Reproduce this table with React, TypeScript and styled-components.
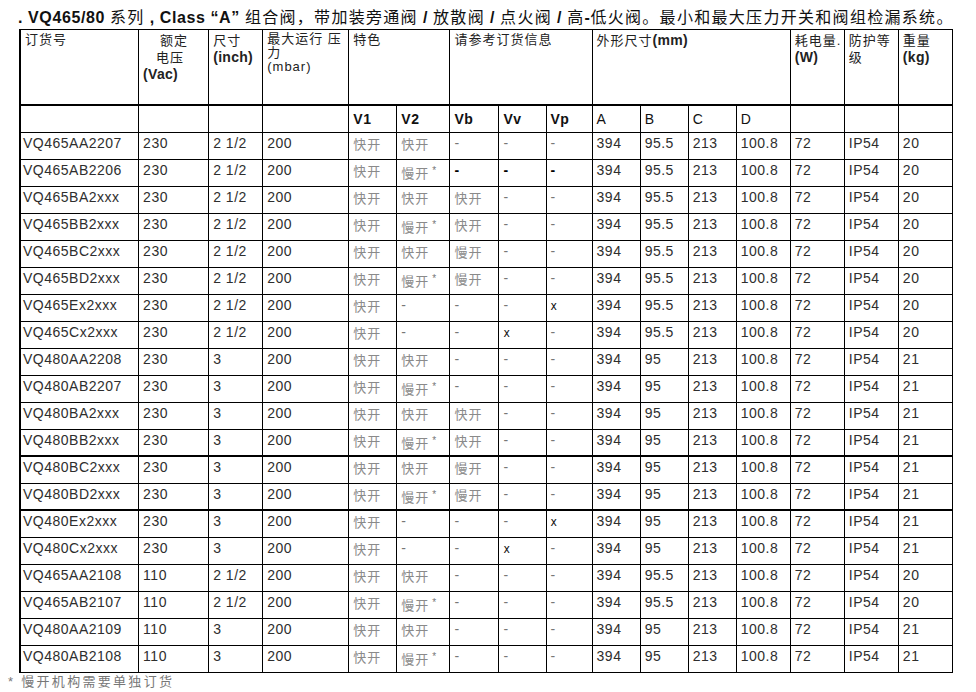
import styled, { createGlobalStyle } from "styled-components";

const GlobalStyle = createGlobalStyle`
  html, body {
    margin: 0;
    padding: 0;
    background: #ffffff;
  }
  body {
    font-family: "Liberation Sans", "Noto Sans CJK SC", sans-serif;
    color: #222222;
  }
`;

const Page = styled.div`
  width: 976px;
  height: 692px;
  padding-left: 8px;
  box-sizing: border-box;
  overflow: hidden;
`;

const Title = styled.h1`
  margin: 0 0 0 10px;
  height: 29px;
  padding-top: 8px;
  box-sizing: border-box;
  font-size: 16px;
  line-height: 19px;
  font-weight: bold;
  color: #111111;
  white-space: nowrap;
  letter-spacing: 0.6px;
`;

const TitleCn = styled.span`
  font-weight: normal;
  font-size: 16px;
  letter-spacing: 1.3px;
`;

const Table = styled.table`
  margin-left: 11px;
  border-collapse: separate;
  border-spacing: 0;
  table-layout: fixed;
  width: 934px;
  border-top: 1px solid #000;
  border-left: 2px solid #000;
  font-size: 14px;
  letter-spacing: 0.5px;
`;

const HeadRow = styled.tr<{ $height: number }>`
  height: ${p => p.$height}px;
`;

const HeadCell = styled.th<{ $thick?: boolean }>`
  border-right: 1px solid #000;
  border-bottom: ${p => (p.$thick ? 2 : 1)}px solid #000;
  vertical-align: top;
  text-align: left;
  font-weight: normal;
  padding: 2px 3px 0 4px;
  font-size: 13px;
  line-height: 16px;
  letter-spacing: 1px;
  color: #222;
  overflow: hidden;
`;

const SubCell = styled.th<{ $bold?: boolean }>`
  border-right: 1px solid #000;
  border-bottom: 1px solid #000;
  vertical-align: middle;
  text-align: left;
  font-weight: ${p => (p.$bold ? "bold" : "normal")};
  padding: 0 4px;
  font-size: 14px;
  color: #111;
`;

const Line = styled.span<{ $indent?: number; $bold?: boolean; $tight?: boolean }>`
  display: block;
  padding-left: ${p => p.$indent ?? 0}px;
  font-weight: ${p => (p.$bold ? "bold" : "normal")};
  font-size: ${p => (p.$bold ? 14 : 13)}px;
  letter-spacing: ${p => (p.$bold ? 0.3 : 1)}px;
  line-height: ${p => (p.$tight ? 14 : 17)}px;
  white-space: nowrap;
`;

const Bold = styled.b`
  font-size: 14px;
  letter-spacing: 0.3px;
`;

const Row = styled.tr`
  height: 27px;
`;

const Cell = styled.td<{ $thick?: boolean; $first?: boolean }>`
  border-right: 1px solid #000;
  border-bottom: ${p => (p.$thick ? 2 : 1)}px solid #000;
  vertical-align: top;
  padding: 2px 2px 0 ${p => (p.$first ? 2 : 4)}px;
  line-height: 16px;
  color: #2e2e2e;
  white-space: nowrap;
  overflow: hidden;
`;

const Speed = styled.span`
  font-size: 13px;
  color: #8a8a8a;
  letter-spacing: 1px;
  position: relative;
  top: 1px;
`;

const Star = styled.span`
  font-size: 10px;
  vertical-align: 4px;
  margin-left: 3px;
  color: #777;
`;

const Dash = styled.span<{ $bold?: boolean }>`
  color: ${p => (p.$bold ? "#000" : "#777")};
  font-weight: ${p => (p.$bold ? "bold" : "normal")};
`;

const Cross = styled.span`
  font-family: "DejaVu Sans Condensed", "Liberation Sans Narrow", sans-serif;
  font-size: 12px;
  color: #111;
`;

const Footnote = styled.div`
  margin-top: 1px;
  font-size: 13px;
  line-height: 16px;
  color: #777;
  letter-spacing: 2.3px;
`;

const widths = [118, 70, 54, 86, 48, 53, 49, 47, 46, 48, 48, 48, 54, 54, 54, 54];

type RowData = {
  code: string;
  volt: string;
  size: string;
  v2: string;
  vb: string;
  vv: string;
  vp: string;
  b: string;
  kg: string;
  boldDash?: boolean;
  thick?: boolean;
};

const rows: RowData[] = [
  { code: "VQ465AA2207", volt: "230", size: "2 1/2", v2: "快开", vb: "-", vv: "-", vp: "-", b: "95.5", kg: "20" },
  { code: "VQ465AB2206", volt: "230", size: "2 1/2", v2: "慢开*", vb: "-", vv: "-", vp: "-", b: "95.5", kg: "20", boldDash: true },
  { code: "VQ465BA2xxx", volt: "230", size: "2 1/2", v2: "快开", vb: "快开", vv: "-", vp: "-", b: "95.5", kg: "20" },
  { code: "VQ465BB2xxx", volt: "230", size: "2 1/2", v2: "慢开*", vb: "快开", vv: "-", vp: "-", b: "95.5", kg: "20" },
  { code: "VQ465BC2xxx", volt: "230", size: "2 1/2", v2: "快开", vb: "慢开", vv: "-", vp: "-", b: "95.5", kg: "20" },
  { code: "VQ465BD2xxx", volt: "230", size: "2 1/2", v2: "慢开*", vb: "慢开", vv: "-", vp: "-", b: "95.5", kg: "20" },
  { code: "VQ465Ex2xxx", volt: "230", size: "2 1/2", v2: "-", vb: "-", vv: "-", vp: "x", b: "95.5", kg: "20" },
  { code: "VQ465Cx2xxx", volt: "230", size: "2 1/2", v2: "-", vb: "-", vv: "x", vp: "-", b: "95.5", kg: "20" },
  { code: "VQ480AA2208", volt: "230", size: "3", v2: "快开", vb: "-", vv: "-", vp: "-", b: "95", kg: "21" },
  { code: "VQ480AB2207", volt: "230", size: "3", v2: "慢开*", vb: "-", vv: "-", vp: "-", b: "95", kg: "21" },
  { code: "VQ480BA2xxx", volt: "230", size: "3", v2: "快开", vb: "快开", vv: "-", vp: "-", b: "95", kg: "21" },
  { code: "VQ480BB2xxx", volt: "230", size: "3", v2: "慢开*", vb: "快开", vv: "-", vp: "-", b: "95", kg: "21", thick: true },
  { code: "VQ480BC2xxx", volt: "230", size: "3", v2: "快开", vb: "慢开", vv: "-", vp: "-", b: "95", kg: "21" },
  { code: "VQ480BD2xxx", volt: "230", size: "3", v2: "慢开*", vb: "慢开", vv: "-", vp: "-", b: "95", kg: "21", thick: true },
  { code: "VQ480Ex2xxx", volt: "230", size: "3", v2: "-", vb: "-", vv: "-", vp: "x", b: "95", kg: "21" },
  { code: "VQ480Cx2xxx", volt: "230", size: "3", v2: "-", vb: "-", vv: "x", vp: "-", b: "95", kg: "21" },
  { code: "VQ465AA2108", volt: "110", size: "2 1/2", v2: "快开", vb: "-", vv: "-", vp: "-", b: "95.5", kg: "20" },
  { code: "VQ465AB2107", volt: "110", size: "2 1/2", v2: "慢开*", vb: "-", vv: "-", vp: "-", b: "95.5", kg: "20" },
  { code: "VQ480AA2109", volt: "110", size: "3", v2: "快开", vb: "-", vv: "-", vp: "-", b: "95", kg: "21" },
  { code: "VQ480AB2108", volt: "110", size: "3", v2: "慢开*", vb: "-", vv: "-", vp: "-", b: "95", kg: "21" },
];

const Value = ({ v, boldDash }: { v: string; boldDash?: boolean }) => {
  if (v === "-") return <Dash $bold={boldDash}>-</Dash>;
  if (v === "x") return <Cross>x</Cross>;
  if (v.endsWith("*"))
    return (
      <Speed>
        {v.slice(0, -1)}
        <Star>*</Star>
      </Speed>
    );
  return <Speed>{v}</Speed>;
};

export default function App() {
  return (
    <Page>
      <GlobalStyle />
      <Title>
        . VQ465/80 <TitleCn>系列</TitleCn> , Class “A” <TitleCn>组合阀，带加装旁通阀</TitleCn> /{" "}
        <TitleCn>放散阀</TitleCn> / <TitleCn>点火阀</TitleCn> / <TitleCn>高</TitleCn>-
        <TitleCn>低火阀。最小和最大压力开关和阀组检漏系统。</TitleCn>
      </Title>
      <Table>
        <colgroup>
          {widths.map((w, i) => (
            <col key={i} style={{ width: w }} />
          ))}
        </colgroup>
        <thead>
          <HeadRow $height={76}>
            <HeadCell $thick>订货号</HeadCell>
            <HeadCell $thick>
              <Line $indent={17}>额定</Line>
              <Line $indent={13}>电压</Line>
              <Line $bold>(Vac)</Line>
            </HeadCell>
            <HeadCell $thick>
              <Line>尺寸</Line>
              <Line $bold>(inch)</Line>
            </HeadCell>
            <HeadCell $thick>
              <Line $tight>最大运行 压</Line>
              <Line $tight>力</Line>
              <Line $tight>(mbar)</Line>
            </HeadCell>
            <HeadCell $thick colSpan={2}>特色</HeadCell>
            <HeadCell $thick colSpan={3}>请参考订货信息</HeadCell>
            <HeadCell $thick colSpan={4}>
              外形尺寸<Bold>(mm)</Bold>
            </HeadCell>
            <HeadCell $thick>
              <Line>耗电量.</Line>
              <Line $bold>(W)</Line>
            </HeadCell>
            <HeadCell $thick>
              <Line>防护等</Line>
              <Line>级</Line>
            </HeadCell>
            <HeadCell $thick>
              <Line>重量</Line>
              <Line $bold>(kg)</Line>
            </HeadCell>
          </HeadRow>
          <HeadRow $height={27}>
            <SubCell />
            <SubCell />
            <SubCell />
            <SubCell />
            <SubCell $bold>V1</SubCell>
            <SubCell $bold>V2</SubCell>
            <SubCell $bold>Vb</SubCell>
            <SubCell $bold>Vv</SubCell>
            <SubCell $bold>Vp</SubCell>
            <SubCell>A</SubCell>
            <SubCell>B</SubCell>
            <SubCell>C</SubCell>
            <SubCell>D</SubCell>
            <SubCell />
            <SubCell />
            <SubCell />
          </HeadRow>
        </thead>
        <tbody>
          {rows.map(r => (
            <Row key={r.code}>
              <Cell $first $thick={r.thick}>{r.code}</Cell>
              <Cell $thick={r.thick}>{r.volt}</Cell>
              <Cell $thick={r.thick}>{r.size}</Cell>
              <Cell $thick={r.thick}>200</Cell>
              <Cell $thick={r.thick}>
                <Value v="快开" />
              </Cell>
              <Cell $thick={r.thick}>
                <Value v={r.v2} />
              </Cell>
              <Cell $thick={r.thick}>
                <Value v={r.vb} boldDash={r.boldDash} />
              </Cell>
              <Cell $thick={r.thick}>
                <Value v={r.vv} boldDash={r.boldDash} />
              </Cell>
              <Cell $thick={r.thick}>
                <Value v={r.vp} boldDash={r.boldDash} />
              </Cell>
              <Cell $thick={r.thick}>394</Cell>
              <Cell $thick={r.thick}>{r.b}</Cell>
              <Cell $thick={r.thick}>213</Cell>
              <Cell $thick={r.thick}>100.8</Cell>
              <Cell $thick={r.thick}>72</Cell>
              <Cell $thick={r.thick}>IP54</Cell>
              <Cell $thick={r.thick}>{r.kg}</Cell>
            </Row>
          ))}
        </tbody>
      </Table>
      <Footnote>* 慢开机构需要单独订货</Footnote>
    </Page>
  );
}
